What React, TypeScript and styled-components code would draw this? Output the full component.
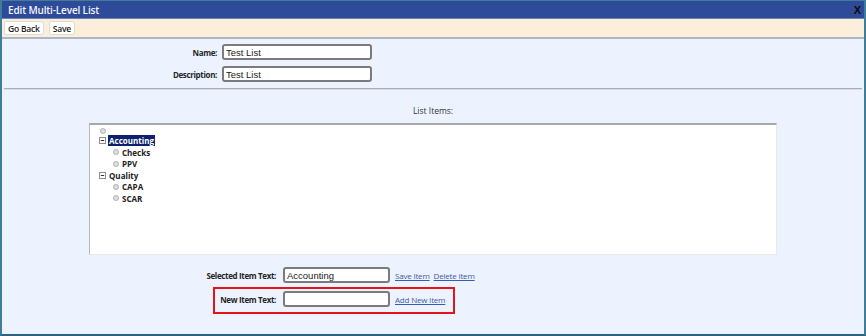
import React from "react";
import styled, { createGlobalStyle } from "styled-components";

const GlobalStyle = createGlobalStyle`
  html, body {
    margin: 0;
    padding: 0;
    background: #ffffff;
  }
  body {
    font-family: "Open Sans", "Liberation Sans", sans-serif;
  }
`;

type TreeItem = {
  label?: string;
  level: 0 | 1 | 2;
  kind: "dot" | "minus";
  selected?: boolean;
};

const treeItems: TreeItem[] = [
  { level: 0, kind: "dot" },
  { label: "Accounting", level: 1, kind: "minus", selected: true },
  { label: "Checks", level: 2, kind: "dot" },
  { label: "PPV", level: 2, kind: "dot" },
  { label: "Quality", level: 1, kind: "minus" },
  { label: "CAPA", level: 2, kind: "dot" },
  { label: "SCAR", level: 2, kind: "dot" },
];

const DotIcon = () => (
  <svg width="6" height="6" viewBox="0 0 6 6">
    <circle cx="3" cy="3" r="2.6" fill="#cfcfcf" stroke="#ababab" strokeWidth="0.7" />
    <path d="M3 1.2v3.6M1.2 3h3.6" stroke="#ececec" strokeWidth="0.7" />
  </svg>
);

const MinusIcon = () => (
  <svg width="7" height="7" viewBox="0 0 7 7">
    <rect x="0.5" y="0.5" width="6" height="6" fill="#ffffff" stroke="#8c8c8c" />
    <path d="M1.8 3.5h3.4" stroke="#333333" strokeWidth="1" />
  </svg>
);

const App: React.FC = () => {
  return (
    <>
      <GlobalStyle />
      <Window>
        <TitleBar>
          <Title>Edit Multi-Level List</Title>
          <CloseMark>X</CloseMark>
        </TitleBar>
        <Toolbar>
          <ToolButton>Go Back</ToolButton>
          <ToolButton>Save</ToolButton>
        </Toolbar>

        <Content>
          <TopForm>
            <FieldRow $gap={5}>
              <FieldLabel $width={215}>Name:</FieldLabel>
              <TextInput $width={150} defaultValue="Test List" />
            </FieldRow>
            <FieldRow $gap={5}>
              <FieldLabel $width={215}>Description:</FieldLabel>
              <TextInput $width={150} defaultValue="Test List" />
            </FieldRow>
          </TopForm>

          <Rule />
          <ListTitle>List Items:</ListTitle>

          <TreeBox>
            {treeItems.map((item, i) => (
              <TreeRow key={i} $level={item.level} $short={item.level === 0}>
                <IconSlot>{item.kind === "dot" ? <DotIcon /> : <MinusIcon />}</IconSlot>
                {item.label && <TreeText $selected={item.selected}>{item.label}</TreeText>}
              </TreeRow>
            ))}
          </TreeBox>

          <BottomForm>
            <FieldRow $gap={7}>
              <FieldLabel $width={274}>Selected Item Text:</FieldLabel>
              <TextInput $width={107} defaultValue="Accounting" />
              <LinkGroup>
                <ActionLink href="#">Save Item</ActionLink>
                <ActionLink href="#">Delete Item</ActionLink>
              </LinkGroup>
            </FieldRow>
            <HighlightRow>
              <FieldRow $gap={7}>
                <FieldLabel $width={61}>New Item Text:</FieldLabel>
                <TextInput $width={107} defaultValue="" />
                <LinkGroup>
                  <ActionLink href="#">Add New Item</ActionLink>
                </LinkGroup>
              </FieldRow>
            </HighlightRow>
          </BottomForm>
        </Content>
      </Window>
    </>
  );
};

export default App;

// Styled Components
const Window = styled.div`
  width: 866px;
  height: 336px;
  box-sizing: border-box;
  display: flex;
  flex-direction: column;
  border-top: 1px solid #3f7d99;
  border-left: 2px solid #3f7d99;
  border-right: 2px solid #3f7d99;
  border-bottom: 2px solid #2b6480;
  background: #edf3fe;
  overflow: hidden;
`;

const TitleBar = styled.div`
  height: 17px;
  display: flex;
  align-items: center;
  justify-content: space-between;
  padding: 0 3px 0 6px;
  background: #2e4b9a;
  border-bottom: 1px solid #6d80b8;
`;

const Title = styled.span`
  color: #f2f4fa;
  font-size: 10px;
  font-weight: 600;
  letter-spacing: -0.15px;
`;

const CloseMark = styled.span`
  color: #0a0a0a;
  font-size: 11px;
  font-weight: 700;
  font-family: "Liberation Sans", sans-serif;
`;

const Toolbar = styled.div`
  height: 18px;
  display: flex;
  align-items: center;
  gap: 5px;
  padding: 0 2px;
  background: #fbeedb;
  border-bottom: 2px solid #aeb5c3;
`;

const ToolButton = styled.button`
  height: 14px;
  padding: 0 3px;
  display: flex;
  align-items: center;
  background: #ffffff;
  border: 1px solid #e2dccf;
  border-radius: 2px;
  color: #222222;
  font-family: "Open Sans", sans-serif;
  font-size: 8.5px;
  font-weight: 600;
  letter-spacing: -0.2px;
  cursor: pointer;
`;

const Content = styled.div`
  flex: 1;
  display: flex;
  flex-direction: column;
`;

const TopForm = styled.div`
  display: flex;
  flex-direction: column;
  gap: 6px;
  padding-top: 5px;
`;

const FieldRow = styled.div<{ $gap: number }>`
  display: flex;
  align-items: center;
  gap: ${({ $gap }) => $gap}px;
`;

const FieldLabel = styled.label<{ $width: number }>`
  width: ${({ $width }) => $width}px;
  flex-shrink: 0;
  text-align: right;
  color: #262626;
  font-size: 8px;
  font-weight: 700;
  letter-spacing: -0.35px;
  white-space: nowrap;
`;

const TextInput = styled.input<{ $width: number }>`
  width: ${({ $width }) => $width}px;
  height: 16px;
  box-sizing: border-box;
  padding: 0 2px;
  border: 2px solid #7b7b7b;
  border-radius: 3px;
  background: #ffffff;
  color: #222222;
  font-family: "Liberation Sans", Arial, sans-serif;
  font-size: 9.5px;
  outline: none;
`;

const Rule = styled.div`
  margin: 6px 2px 0;
  border-top: 1px solid #a9adb5;
  border-bottom: 1px solid #d8dde6;
`;

const ListTitle = styled.div`
  height: 33px;
  display: flex;
  align-items: center;
  justify-content: center;
  padding-top: 7px;
  box-sizing: border-box;
  color: #333333;
  font-size: 8.5px;
`;

const TreeBox = styled.div`
  margin: 0 87px;
  height: 132px;
  box-sizing: border-box;
  padding-top: 1px;
  background: #ffffff;
  border-top: 2px solid #a8a8a8;
  border-left: 1px solid #b8b8b8;
  border-right: 1px solid #e8e8e8;
  border-bottom: 1px solid #e8e8e8;
`;

const TreeRow = styled.div<{ $level: number; $short?: boolean }>`
  height: ${({ $short }) => ($short ? 9 : 11.5)}px;
  display: flex;
  align-items: center;
  gap: 2px;
  padding-left: ${({ $level }) => ($level === 2 ? 22 : 9)}px;
`;

const IconSlot = styled.span`
  width: 7px;
  height: 7px;
  display: flex;
  align-items: center;
  justify-content: center;
`;

const TreeText = styled.span<{ $selected?: boolean }>`
  padding: 0 1px;
  line-height: 11px;
  font-size: 8px;
  font-weight: 700;
  color: ${({ $selected }) => ($selected ? "#ffffff" : "#222222")};
  background: ${({ $selected }) => ($selected ? "#0d2170" : "transparent")};
`;

const BottomForm = styled.div`
  display: flex;
  flex-direction: column;
  align-items: flex-start;
  gap: 4px;
  padding-top: 12px;
`;

const HighlightRow = styled.div`
  margin-left: 211px;
  padding: 2px 8px 5px 0;
  border: 2px solid #e8121b;
`;

const LinkGroup = styled.div`
  display: flex;
  gap: 4px;
  margin-left: -2px;
`;

const ActionLink = styled.a`
  color: #3a5bb0;
  font-size: 8px;
  letter-spacing: -0.2px;
  text-decoration: underline;
  white-space: nowrap;
`;
